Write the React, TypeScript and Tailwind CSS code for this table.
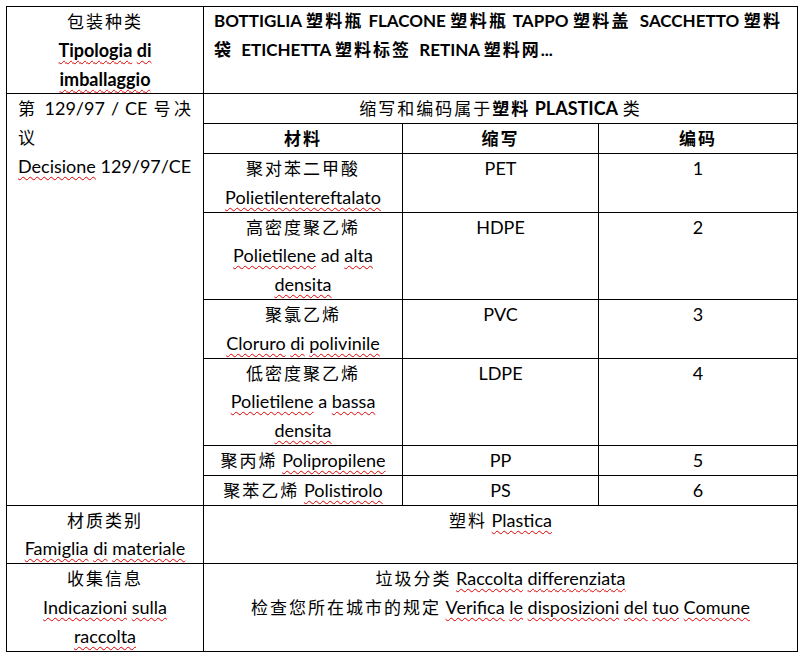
import type { ReactNode } from 'react'

// CJK runs get a little extra spacing, like Word's character grid
function C({ children }: { children: ReactNode }) {
  return <span className="text-[17px] leading-none tracking-[2px]">{children}</span>
}

// spell-check squiggle
function Sq({ children }: { children: ReactNode }) {
  return (
    <span className="underline decoration-wavy decoration-[#e00000] decoration-1 underline-offset-[3px] [text-decoration-skip-ink:none]">
      {children}
    </span>
  )
}

const cell = 'border border-black align-top p-0'

const rows: { mat: ReactNode; abbr: string; code: string }[] = [
  {
    mat: (
      <>
        <div><C>聚对苯二甲酸</C></div>
        <div><Sq>Polietilentereftalato</Sq></div>
      </>
    ),
    abbr: 'PET',
    code: '1',
  },
  {
    mat: (
      <>
        <div><C>高密度聚乙烯</C></div>
        <div><Sq>Polietilene</Sq> ad <Sq>alta</Sq></div>
        <div><Sq>densita</Sq></div>
      </>
    ),
    abbr: 'HDPE',
    code: '2',
  },
  {
    mat: (
      <>
        <div><C>聚氯乙烯</C></div>
        <div><Sq>Cloruro</Sq> <Sq>di</Sq> <Sq>polivinile</Sq></div>
      </>
    ),
    abbr: 'PVC',
    code: '3',
  },
  {
    mat: (
      <>
        <div><C>低密度聚乙烯</C></div>
        <div><Sq>Polietilene</Sq> a <Sq>bassa</Sq></div>
        <div><Sq>densita</Sq></div>
      </>
    ),
    abbr: 'LDPE',
    code: '4',
  },
  {
    mat: <div><C>聚丙烯</C> <Sq>Polipropilene</Sq></div>,
    abbr: 'PP',
    code: '5',
  },
  {
    mat: <div><C>聚苯乙烯</C> <Sq>Polistirolo</Sq></div>,
    abbr: 'PS',
    code: '6',
  },
]

export default function App() {
  return (
    <div className="min-h-screen bg-white pt-[6px] pl-[6px] font-['Lato','Noto_Sans_CJK_SC',sans-serif] text-black">
      <table className="table-fixed border-collapse w-[791px] text-[18px] leading-[28.8px]">
        <colgroup>
          <col className="w-[197px]" />
          <col className="w-[199px]" />
          <col className="w-[196px]" />
          <col className="w-[199px]" />
        </colgroup>
        <tbody>
          {/* packaging type */}
          <tr>
            <td className={`${cell} text-center`}>
              <div><C>包装种类</C></div>
              <div className="font-bold"><Sq>Tipologia</Sq> <Sq>di</Sq></div>
              <div className="font-bold"><Sq>imballaggio</Sq></div>
            </td>
            <td colSpan={3} className={`${cell} pl-[10px] pr-[15px] font-bold text-[17px]`}>
              <div className="whitespace-nowrap text-justify [text-align-last:justify]">
                BOTTIGLIA <C>塑料瓶</C> FLACONE <C>塑料瓶</C> TAPPO <C>塑料盖</C>&nbsp; SACCHETTO <C>塑料</C>
              </div>
              <div>
                <C>袋</C>&nbsp; ETICHETTA <C>塑料标签</C>&nbsp; RETINA <C>塑料网</C>...
              </div>
            </td>
          </tr>

          {/* decision + codes table */}
          <tr>
            <td rowSpan={8} className={`${cell} pl-[11px] pr-[10px]`}>
              <div className="whitespace-nowrap text-justify [text-align-last:justify]">
                <C>第</C> 129/97 / CE <C>号决</C>
              </div>
              <div><C>议</C></div>
              <div><Sq>Decisione</Sq> 129/97/CE</div>
            </td>
            <td colSpan={3} className={`${cell} text-center`}>
              <C>缩写和编码属于</C>
              <span className="font-bold"><C>塑料</C> PLASTICA</span> <C>类</C>
            </td>
          </tr>
          <tr className="font-bold text-center">
            <td className={cell}><C>材料</C></td>
            <td className={cell}><C>缩写</C></td>
            <td className={cell}><C>编码</C></td>
          </tr>
          {rows.map((r) => (
            <tr key={r.abbr} className="text-center">
              <td className={cell}>{r.mat}</td>
              <td className={cell}>{r.abbr}</td>
              <td className={cell}>{r.code}</td>
            </tr>
          ))}

          {/* material family */}
          <tr className="text-center">
            <td className={cell}>
              <div><C>材质类别</C></div>
              <div><Sq>Famiglia</Sq> <Sq>di</Sq> <Sq>materiale</Sq></div>
            </td>
            <td colSpan={3} className={cell}>
              <C>塑料</C> <Sq>Plastica</Sq>
            </td>
          </tr>

          {/* collection info */}
          <tr className="text-center">
            <td className={cell}>
              <div><C>收集信息</C></div>
              <div><Sq>Indicazioni</Sq> <Sq>sulla</Sq></div>
              <div><Sq>raccolta</Sq></div>
            </td>
            <td colSpan={3} className={cell}>
              <div><C>垃圾分类</C> <Sq>Raccolta</Sq> <Sq>differenziata</Sq></div>
              <div>
                <C>检查您所在城市的规定</C> <Sq>Verifica</Sq> <Sq>le</Sq> <Sq>disposizioni</Sq>{' '}
                <Sq>del</Sq> <Sq>tuo</Sq> <Sq>Comune</Sq>
              </div>
            </td>
          </tr>
        </tbody>
      </table>
    </div>
  )
}
